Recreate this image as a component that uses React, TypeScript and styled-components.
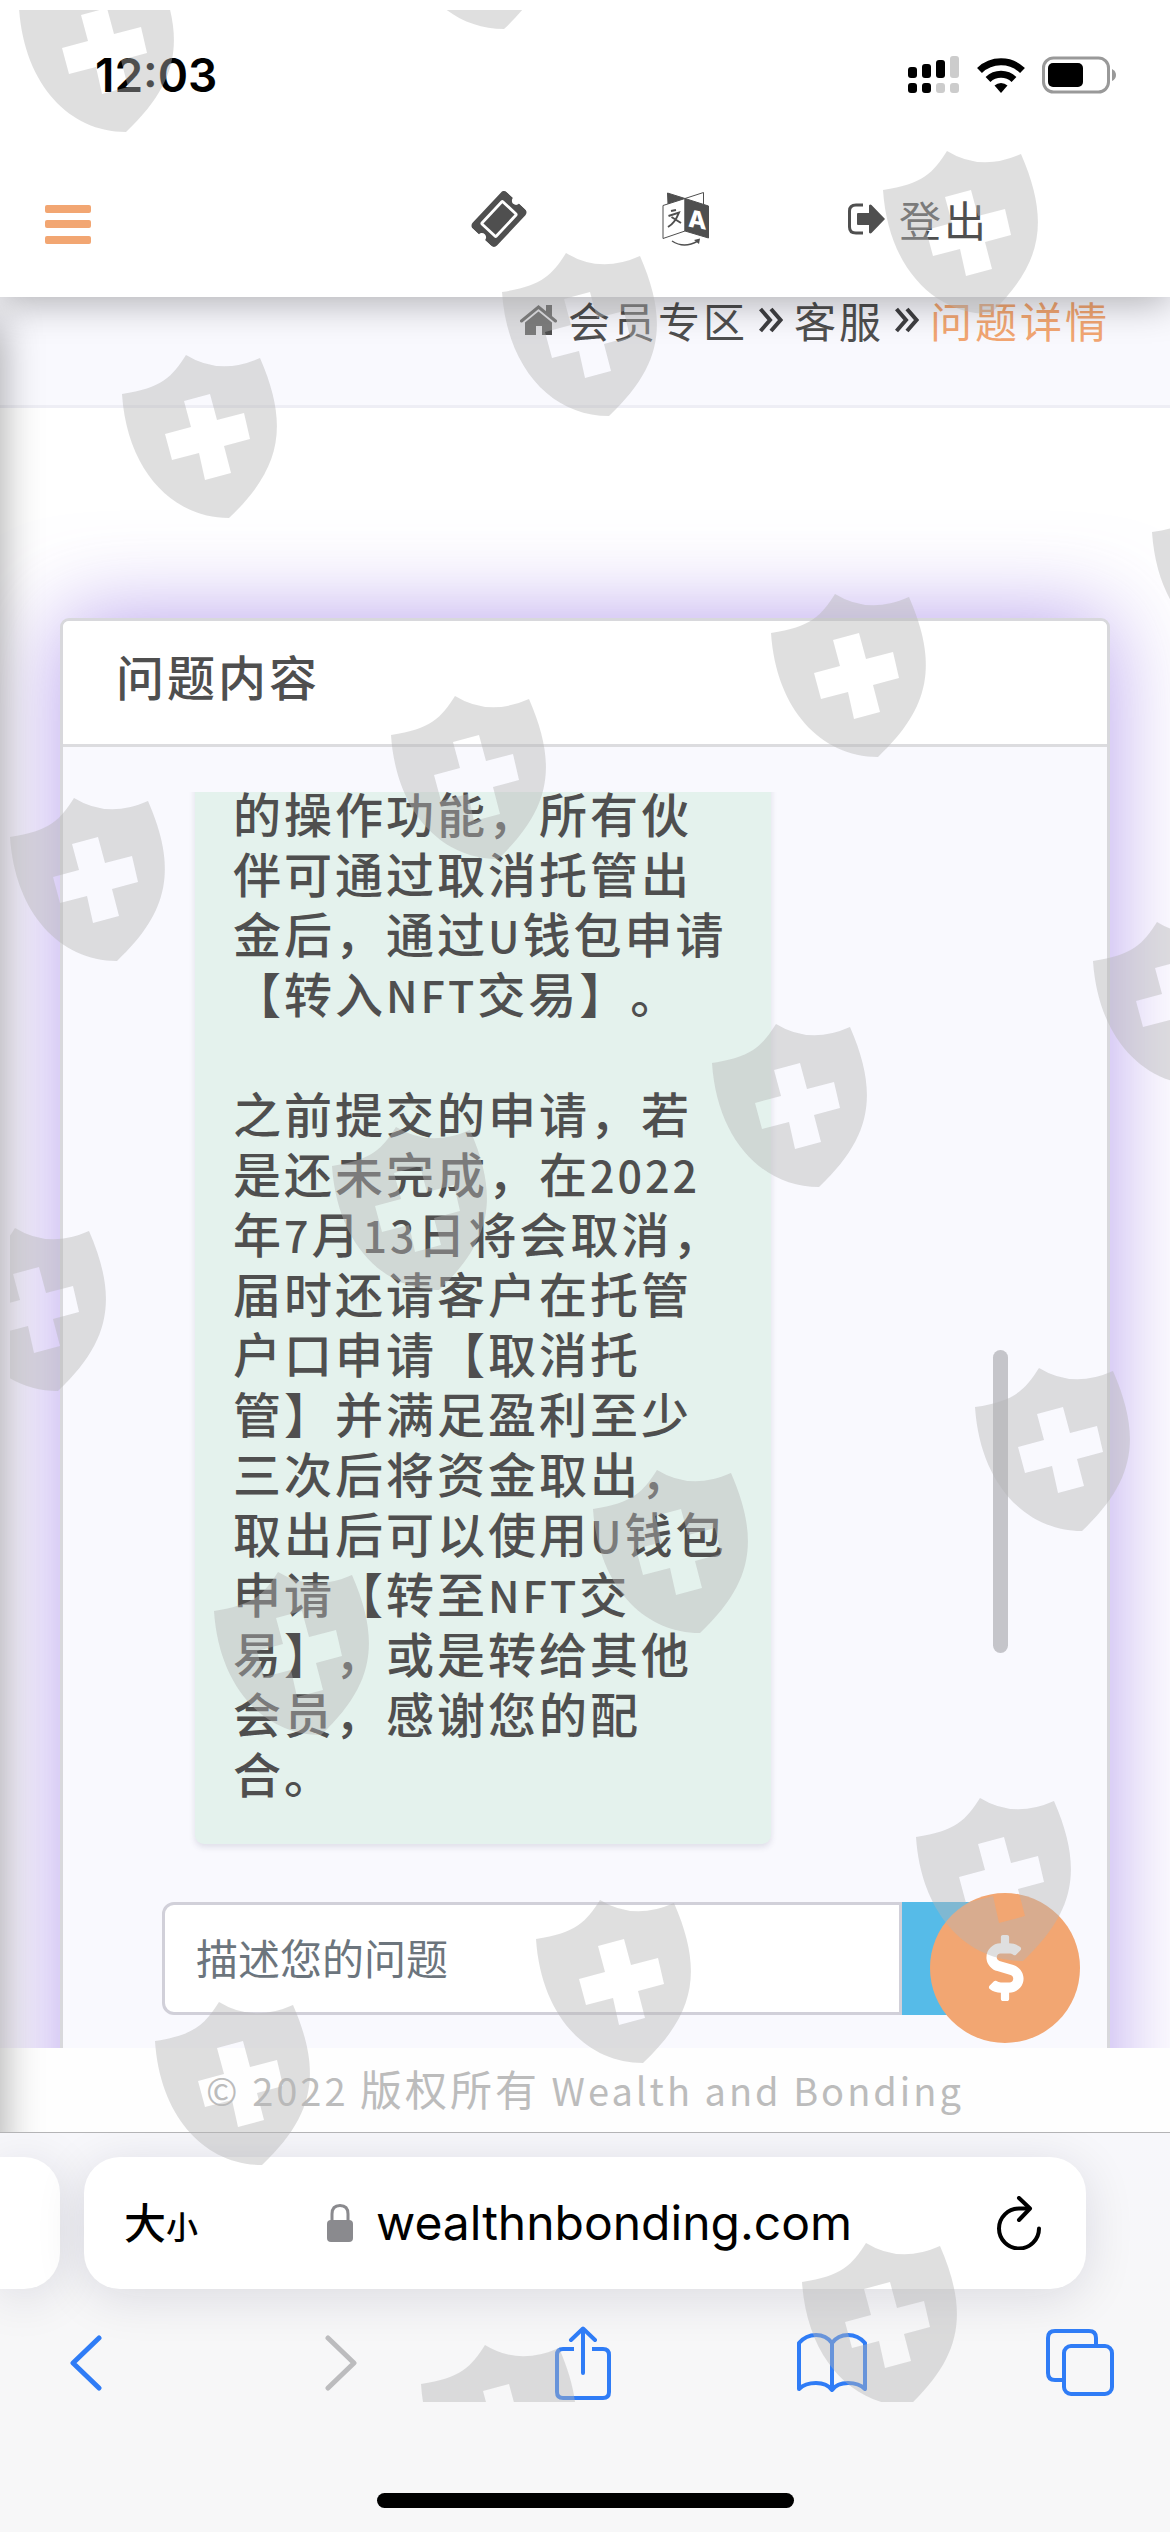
import React from "react";
import styled, { createGlobalStyle } from "styled-components";
import { FaDollarSign, FaTicketAlt } from "react-icons/fa";

const ink = "#4f4f4f";
const accent = "#f2a672";
const safariBlue = "#2f7cf6";
const hanFont = '"Noto Sans CJK SC", "Noto Sans", sans-serif';
const systemFont = 'Inter, "Noto Sans CJK SC", sans-serif';

const GlobalStyle = createGlobalStyle`
  * { box-sizing: border-box; }
  body { margin: 0; background: #fff; }
  button, input { font: inherit; color: inherit; letter-spacing: inherit; }
  button { border: 0; padding: 0; background: none; cursor: pointer; }
  a { color: inherit; text-decoration: none; }
  svg { display: block; flex: none; }
`;

const Screen = styled.div`
  position: relative;
  display: flex;
  flex-direction: column;
  min-height: 100vh;
  overflow: hidden;
  color: ${ink};
  font-family: ${hanFont};
  font-size: 42px;
  line-height: 48px;
  letter-spacing: 3px;
  text-spacing-trim: space-all;
`;

/* ---------- status bar ---------- */

const StatusBar = styled.header`
  position: relative;
  z-index: 3;
  display: flex;
  align-items: center;
  justify-content: space-between;
  padding: 45px 54px 36px 95px;
  background: #fff;
  color: #000;
  font-family: ${systemFont};
  font-size: 46px;
  font-weight: 600;
  line-height: 60px;
  letter-spacing: 0;
`;

const StatusIcons = styled.div`
  display: flex;
  align-items: center;
  gap: 17px;
`;

/* ---------- site navigation ---------- */

const Navbar = styled.nav`
  position: relative;
  z-index: 2;
  display: flex;
  align-items: center;
  padding: 48px 181px 44px 45px;
  background: #fff;
  box-shadow: 0 6px 36px rgba(0, 0, 0, 0.3);
  line-height: 60px;
`;

const NavButton = styled.button`
  display: flex;
  align-items: center;
  color: ${(p) => p.color || ink};
`;

const NavActions = styled.div`
  display: flex;
  align-items: center;
  gap: 138px;
  margin-left: auto;
  padding-bottom: 4px;
`;

const LogoutLink = styled.a`
  display: flex;
  align-items: center;
  gap: 14px;
`;

const TicketIcon = styled(FaTicketAlt)`
  transform: rotate(-47deg);
`;

/* ---------- page ---------- */

const Viewport = styled.div`
  position: relative;
  overflow: hidden;
  background: #fff;

  /* shadow of the closed side menu */
  &::before {
    content: "";
    position: absolute;
    z-index: 1;
    top: 24px;
    bottom: -40px;
    left: -40px;
    width: 40px;
    box-shadow: 0 0 42px rgba(0, 0, 0, 0.38);
    pointer-events: none;
  }
`;

const Breadcrumb = styled.div`
  display: flex;
  align-items: center;
  justify-content: flex-end;
  gap: 11px;
  padding: 0 60px 63px;
  border-bottom: 3px solid #eeeef5;
  background: #f9f9fe;
  line-height: 45px;
`;

const CurrentPage = styled.span`
  color: ${accent};
`;

const Main = styled.main`
  overflow: hidden;
  padding: 210px 60px 0;
`;

const Card = styled.section`
  margin-bottom: -153px;
  padding-bottom: 150px;
  border: 3px solid #d8d8dc;
  border-radius: 9px;
  background: #f9f9fe;
  box-shadow: 0 0 90px rgba(132, 94, 224, 0.6);
`;

const CardTitle = styled.h1`
  margin: 0;
  padding: 24px 53px 39px;
  border-bottom: 3px solid #dcdcdf;
  border-radius: 6px 6px 0 0;
  background: #fff;
  font-size: 48px;
  font-weight: 500;
  line-height: 60px;
`;

const CardBody = styled.div`
  padding: 45px 99px 33px;
`;

const ChatLog = styled.div`
  position: relative;
  display: flex;
  flex-direction: column;
  justify-content: flex-end;
  height: 1080px;
  padding: 0 33px 28px;
  overflow: hidden;
`;

const Message = styled.article`
  width: 576px;
  padding: 36px 34px 42px 38px;
  border-radius: 9px;
  background: #e4f2ed;
  box-shadow: 0 3px 6px rgba(60, 60, 90, 0.14);
  font-size: 48px;
  font-weight: 500;
  line-height: 60px;
`;

const Paragraph = styled.p`
  margin: 0 0 60px;
  &:last-child { margin-bottom: 0; }
`;

/* Latin letters and digits are set smaller than the Han characters around them. */
const Latin = styled.span<{ $size: number }>`
  font-size: ${(p) => p.$size}px;
  line-height: 1;
`;

const ScrollThumb = styled.div`
  position: absolute;
  top: 558px;
  right: 0;
  width: 15px;
  height: 303px;
  border-radius: 8px;
  background: #c5c5ca;
`;

const ReplyForm = styled.form`
  display: flex;
  height: 113px;
  margin-top: 30px;
`;

const ReplyInput = styled.input`
  flex: 1;
  min-width: 0;
  padding: 0 31px 3px;
  border: 3px solid #d1d0d9;
  border-radius: 12px 0 0 12px;
  background: #fff;
  letter-spacing: 0;
  &::placeholder { color: #6c757d; opacity: 1; }
`;

const SendButton = styled.button`
  width: 106px;
  background: #56bbe8;
`;

const PayButton = styled.button`
  position: absolute;
  z-index: 2;
  right: 90px;
  bottom: 89px;
  display: flex;
  align-items: center;
  justify-content: center;
  width: 150px;
  height: 150px;
  border-radius: 50%;
  background: ${accent};
  color: #fff;
`;

const Footer = styled.footer`
  position: relative;
  padding: 16px 24px 20px;
  background: #fefefe;
  color: #bcbcbc;
  text-align: center;
`;

/* ---------- browser chrome ---------- */

const BrowserBar = styled.div`
  flex: 1;
  display: flex;
  flex-direction: column;
  border-top: 1px solid #b4b4b6;
  background: linear-gradient(#f7f7fb, #f7f7f8 50%);
  letter-spacing: 0;
  overflow: hidden;
`;

const TabStrip = styled.div`
  display: flex;
  gap: 24px;
  padding: 24px 84px 0 0;
`;

const NeighbourTab = styled.div`
  width: 60px;
  border-radius: 0 36px 36px 0;
  background: #fff;
  box-shadow: 0 8px 50px rgba(20, 20, 50, 0.12);
`;

const AddressBar = styled.div`
  flex: 1;
  display: grid;
  grid-template-columns: 1fr auto 1fr;
  align-items: center;
  height: 132px;
  padding: 0 44px 0 40px;
  border-radius: 36px;
  background: #fff;
  box-shadow: 0 8px 50px rgba(20, 20, 50, 0.12);
  color: #000;
`;

const TextSizeButton = styled.button`
  justify-self: start;
  font-size: 42px;
  font-weight: 500;
  small { font-size: 32px; }
`;

const Domain = styled.button`
  display: flex;
  align-items: center;
  gap: 22px;
  padding-left: 12px;
  font-family: ${systemFont};
  font-size: 48px;
  line-height: 60px;
`;

const ReloadButton = styled.button`
  justify-self: end;
`;

const Toolbar = styled.div`
  display: flex;
  align-items: center;
  justify-content: space-between;
  padding: 36px 54px 0 50px;
`;

const ToolButton = styled.button`
  display: flex;
  align-items: center;
  justify-content: center;
  width: 72px;
  height: 76px;
`;

const HomeIndicator = styled.div`
  width: 417px;
  height: 15px;
  margin: auto auto 24px;
  border-radius: 8px;
  background: #000;
`;

/* ---------- watermark ---------- */

const WatermarkLayer = styled.svg`
  position: absolute;
  z-index: 5;
  top: 10px;
  left: 10px;
  width: calc(100% - 10px);
  height: calc(100% - 140px);
  overflow: hidden;
  pointer-events: none;
`;

const shields = [
  [9, -41], [387, -144],
  [112, 345], [492, 243], [873, 141],
  [0, 788], [381, 686], [761, 584], [1142, 483],
  [-59, 1218], [322, 1117], [702, 1014], [1083, 912],
  [204, 1562], [583, 1460], [965, 1358],
  [145, 1992], [526, 1890], [906, 1788],
  [411, 2335], [792, 2233],
];

const Watermark = () => (
  <WatermarkLayer aria-hidden="true">
    <defs>
      <path
        id="shield"
        fillRule="evenodd"
        d="M0 39C40 33 50 22 64 0Q98 21 138 3C167 70 160 113 107 163C50 163 5 115 0 39ZM62 46 69 72 43 79 50 105 77 98 83 125 109 118 102 91 128 84 122 58 95 65 88 39Z"
      />
    </defs>
    <g fill="#b5b5b5" fillOpacity="0.43">
      {shields.map(([x, y]) => (
        <use key={`${x},${y}`} href="#shield" x={x} y={y} />
      ))}
    </g>
  </WatermarkLayer>
);

/* ---------- icons ---------- */

const SignalIcon = () => (
  <svg width="52" height="38" viewBox="0 0 52 38">
    <rect x="0" y="11" width="9" height="11" rx="3" />
    <rect x="14" y="8" width="9" height="14" rx="3" />
    <rect x="28" y="4" width="9" height="18" rx="3" />
    <rect x="42" y="0" width="9" height="22" rx="3" fill="#ccc" />
    <rect x="0" y="27" width="9" height="10" rx="3" />
    <rect x="14" y="27" width="9" height="10" rx="3" />
    <rect x="28" y="27" width="9" height="10" rx="3" fill="#ccc" />
    <rect x="42" y="27" width="9" height="10" rx="3" fill="#ccc" />
  </svg>
);

const WifiIcon = () => (
  <svg width="48" height="38" viewBox="0 0 48 38" fill="none" stroke="#000" strokeWidth="7">
    <path d="M2.500 14.500A31 31 0 0 1 45.500 14.500" />
    <path d="M11 23.500A19 19 0 0 1 37 23.500" />
    <path d="M17.500 29.500A9.500 9.500 0 0 1 30.500 29.500L24 37Z" fill="#000" stroke="none" />
  </svg>
);

const BatteryIcon = () => (
  <svg width="74" height="38" viewBox="0 0 74 38">
    <rect x="1.500" y="2" width="65" height="34" rx="10" fill="none" stroke="#999" strokeWidth="3" />
    <rect x="6" y="7" width="35" height="24" rx="5" />
    <path d="M70 13Q74 15 74 19T70 25Z" fill="#999" />
  </svg>
);

const MenuIcon = () => (
  <svg width="46" height="48" viewBox="0 0 46 48" fill="currentColor">
    <rect y="8" width="46" height="8" rx="2" />
    <rect y="23" width="46" height="8" rx="2" />
    <rect y="39" width="46" height="8" rx="2" />
  </svg>
);

const LanguageIcon = () => (
  <svg width="48" height="54" viewBox="0 0 48 54" fill="none" stroke={ink}>
    <path d="M5.500 1 23 6.500 6 12Z" fill={ink} />
    <path d="M23 6.500 41.500 0.500V12" />
    <path d="M1 13.500 23 6.500V39L1 46.500Z" fill="#fff" />
    <path d="M23 6.500 46.500 14V46L23 39Z" fill={ink} />
    <path d="M9 19 14 18M6.500 24 17 20.500Q13 31 6 35M9.500 25 19 31" strokeWidth="2" />
    <text x="26" y="35" fill="#fff" stroke="none" fontFamily="Inter, sans-serif" fontWeight="800" fontSize="24" letterSpacing="0" transform="skewY(10) translate(0 -5)">A</text>
    <path d="M10 49Q22 57 36 49" strokeWidth="1.500" />
    <path d="M32 48 38 46.500 37 52Z" fill={ink} stroke="none" />
  </svg>
);

const LogoutIcon = () => (
  <svg width="37" height="32" viewBox="0 0 37 32" fill={ink}>
    <path d="M15 2H8Q1.500 2 1.500 8V24Q1.500 30 8 30H15" fill="none" stroke={ink} strokeWidth="3" />
    <path d="M10 10H21V2.500Q22 1 23.500 2L37 16 23.500 30Q22 31 21 29.500V22H10Q9 22 9 21V11Q9 10 10 10Z" />
  </svg>
);

const HomeIcon = () => (
  <svg width="37" height="32" viewBox="0 0 37 32" fill={ink}>
    <path d="M26 1H32V14L26 8Z" />
    <path d="M1.500 17 18.500 3 35.500 17" fill="none" stroke={ink} strokeWidth="3" strokeLinecap="round" />
    <path d="M18.500 7.500 32 18.500V31H22V22H16V31H5V18.500Z" />
  </svg>
);

const ChevronsIcon = () => (
  <svg width="24" height="26" viewBox="0 0 24 26" fill="none" stroke="#3f3f42" strokeWidth="4">
    <path d="M1.500 2 11 13 1.500 24M12 2 21.500 13 12 24" />
  </svg>
);

const LockIcon = () => (
  <svg width="28" height="40" viewBox="0 0 28 40" fill="#8a8a8e">
    <rect x="1" y="17" width="26" height="22" rx="4" />
    <path d="M6 18V11Q6 2.500 14 2.500T22 11V18" fill="none" stroke="#8a8a8e" strokeWidth="3" />
  </svg>
);

const ReloadIcon = () => (
  <svg width="46" height="54" viewBox="0 0 46 54" fill="none" stroke="#000" strokeWidth="4" strokeLinecap="round" strokeLinejoin="round">
    <path d="M33 12.500H23A20 20 0 1 0 43 32.500" />
    <path d="M23 2 34 12.500 23 24" />
  </svg>
);

const BackIcon = () => (
  <svg width="32" height="56" viewBox="0 0 32 56" fill="none" stroke={safariBlue} strokeWidth="5" strokeLinecap="round" strokeLinejoin="round">
    <path d="M29 3 3 28 29 53" />
  </svg>
);

const ForwardIcon = () => (
  <svg width="44" height="56" viewBox="-12 0 44 56" fill="none" stroke="#bcbcbe" strokeWidth="5" strokeLinecap="round" strokeLinejoin="round">
    <path d="M3 3 29 28 3 53" />
  </svg>
);

const ShareIcon = () => (
  <svg width="56" height="74" viewBox="0 0 56 74" fill="none" stroke={safariBlue} strokeWidth="4" strokeLinejoin="round">
    <path d="M19 23H8Q2 23 2 29V66Q2 72 8 72H48Q54 72 54 66V29Q54 23 48 23H37" />
    <path d="M28 47V3M16 14 28 2.500 40 14" strokeLinecap="round" />
  </svg>
);

const BookIcon = () => (
  <svg width="72" height="60" viewBox="0 0 72 60" fill="none" stroke={safariBlue} strokeWidth="4" strokeLinejoin="round" strokeLinecap="round">
    <path d="M36 57V10Q30 2 20 2T3 10V56Q9 50 20 50T36 57Q41 50 52 50T69 56V10Q62 2 52 2T36 10" />
  </svg>
);

const TabsIcon = () => (
  <svg width="68" height="68" viewBox="0 0 68 68" fill="none" stroke={safariBlue} strokeWidth="4">
    <path d="M17 51H9Q2 51 2 44V9Q2 2 9 2H43Q50 2 50 9V17" />
    <rect x="18" y="17" width="48" height="48" rx="7" />
  </svg>
);

const messageParagraphs = [
  "的操作功能，所有伙伴可通过取消托管出金后，通过U钱包申请【转入NFT交易】。",
  "之前提交的申请，若是还未完成，在2022年7月13日将会取消，届时还请客户在托管户口申请【取消托管】并满足盈利至少三次后将资金取出，取出后可以使用U钱包申请【转至NFT交易】，或是转给其他会员，感谢您的配合。",
];

const MixedText = ({ text }: { text: string }) => (
  <>
    {text.split(/([A-Za-z0-9]+)/).map((part, i) =>
      i % 2 ? <Latin key={i} $size={43}>{part}</Latin> : part
    )}
  </>
);

export default function App() {
  return (
    <Screen lang="zh-CN">
      <GlobalStyle />
      <StatusBar>
        <time>12:03</time>
        <StatusIcons>
          <SignalIcon />
          <WifiIcon />
          <BatteryIcon />
        </StatusIcons>
      </StatusBar>

      <Navbar>
        <NavButton color={accent} aria-label="菜单"><MenuIcon /></NavButton>
        <NavActions>
          <NavButton aria-label="工单"><TicketIcon size={50} /></NavButton>
          <NavButton aria-label="语言"><LanguageIcon /></NavButton>
          <LogoutLink href="#logout"><LogoutIcon />登出</LogoutLink>
        </NavActions>
      </Navbar>

      <Viewport>
        <Breadcrumb>
          <HomeIcon />
          <a href="#member">会员专区</a>
          <ChevronsIcon />
          <a href="#service">客服</a>
          <ChevronsIcon />
          <CurrentPage>问题详情</CurrentPage>
        </Breadcrumb>

        <Main>
          <Card>
            <CardTitle>问题内容</CardTitle>
            <CardBody>
              <ChatLog>
                <Message>
                  {messageParagraphs.map((text) => (
                    <Paragraph key={text}><MixedText text={text} /></Paragraph>
                  ))}
                </Message>
                <ScrollThumb />
              </ChatLog>
              <ReplyForm>
                <ReplyInput type="text" placeholder="描述您的问题" aria-label="描述您的问题" />
                <SendButton type="button" aria-label="发送" />
              </ReplyForm>
            </CardBody>
          </Card>
        </Main>

        <Footer>
          <Latin $size={38}>© 2022 </Latin>版权所有<Latin $size={38}> Wealth and Bonding</Latin>
        </Footer>
        <PayButton aria-label="付款"><FaDollarSign size={66} /></PayButton>
      </Viewport>

      <BrowserBar>
        <TabStrip>
          <NeighbourTab />
          <AddressBar>
            <TextSizeButton>大<small>小</small></TextSizeButton>
            <Domain><LockIcon />wealthnbonding.com</Domain>
            <ReloadButton aria-label="重新载入"><ReloadIcon /></ReloadButton>
          </AddressBar>
        </TabStrip>
        <Toolbar>
          <ToolButton aria-label="后退"><BackIcon /></ToolButton>
          <ToolButton aria-label="前进"><ForwardIcon /></ToolButton>
          <ToolButton aria-label="分享"><ShareIcon /></ToolButton>
          <ToolButton aria-label="书签"><BookIcon /></ToolButton>
          <ToolButton aria-label="标签页"><TabsIcon /></ToolButton>
        </Toolbar>
        <HomeIndicator />
      </BrowserBar>

      <Watermark />
    </Screen>
  );
}
